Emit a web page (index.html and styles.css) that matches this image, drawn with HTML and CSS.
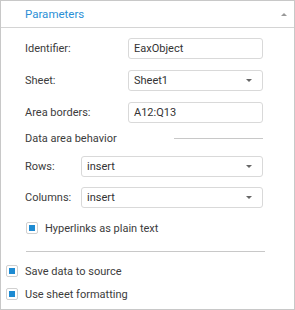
FILE: index.html
```html
<!DOCTYPE html>
<html lang="en">
<head>
    <meta charset="UTF-8">
    <meta name="viewport" content="width=device-width, initial-scale=1.0">
    <title>Parameters</title>
    <link rel="stylesheet" href="styles.css">
</head>
<body>
    <div class="panel">
        <div class="panel-header">
            <span class="panel-title">Parameters</span>
            <span class="collapse-arrow"></span>
        </div>
        <div class="panel-body">
            <div class="group">
                <div class="field-row">
                    <span class="field-label">Identifier:</span>
                    <div class="control wide">EaxObject</div>
                </div>
                <div class="field-row">
                    <span class="field-label">Sheet:</span>
                    <div class="control wide select">Sheet1<span class="drop-arrow"></span></div>
                </div>
                <div class="field-row">
                    <span class="field-label">Area borders:</span>
                    <div class="control wide">A12:Q13</div>
                </div>
                <div class="section-title">
                    <span>Data area behavior</span>
                    <span class="section-line"></span>
                </div>
                <div class="field-row short">
                    <span class="field-label">Rows:</span>
                    <div class="control select">insert<span class="drop-arrow"></span></div>
                </div>
                <div class="field-row short">
                    <span class="field-label">Columns:</span>
                    <div class="control select">insert<span class="drop-arrow"></span></div>
                </div>
                <label class="check-row">
                    <span class="checkbox checked"></span>
                    <span>Hyperlinks as plain text</span>
                </label>
            </div>
            <div class="separator"></div>
            <label class="check-row outer">
                <span class="checkbox checked"></span>
                <span>Save data to source</span>
            </label>
            <label class="check-row outer">
                <span class="checkbox checked"></span>
                <span>Use sheet formatting</span>
            </label>
        </div>
    </div>
</body>
</html>
```

FILE: styles.css
```css
* {
    margin: 0;
    padding: 0;
    box-sizing: border-box;
    font-family: Roboto, "Liberation Sans", Arial, sans-serif;
}
body {
    background: #fff;
}
.panel {
    width: 295px;
    height: 310px;
    border: 1px solid #c8c8c8;
    font-size: 11px;
    color: #3c3c3c;
}
.panel-header {
    height: 27px;
    border-bottom: 1px solid #d4d4d4;
    display: flex;
    align-items: center;
    padding-left: 24px;
    padding-right: 7px;
}
.panel-title {
    color: #2b8fd6;
    font-size: 11.5px;
    flex: 1;
}
.collapse-arrow {
    width: 0;
    height: 0;
    border-left: 3px solid transparent;
    border-right: 3px solid transparent;
    border-bottom: 3px solid #999;
}
.panel-body {
    padding-top: 10px;
}
.group {
    padding-left: 24px;
    padding-right: 31px;
}
.field-row {
    display: flex;
    align-items: center;
    margin-bottom: 11px;
}
.field-label {
    width: 103px;
}
.field-row.short .field-label {
    width: 56px;
}
.field-row.short {
    margin-bottom: 10px;
}
.control {
    flex: 1;
    height: 21px;
    border: 1px solid #d9d9d9;
    border-radius: 3px;
    display: flex;
    align-items: center;
    padding-left: 5px;
    padding-right: 10px;
    color: #333;
}
.select {
    justify-content: space-between;
}
.drop-arrow {
    width: 0;
    height: 0;
    border-left: 3px solid transparent;
    border-right: 3px solid transparent;
    border-top: 3px solid #666;
}
.section-title {
    display: flex;
    align-items: center;
    height: 16px;
    margin-top: -4px;
    margin-bottom: 10px;
}
.section-line {
    margin-left: auto;
    width: 89px;
    border-top: 1px solid #c8c8c8;
}
.check-row {
    display: flex;
    align-items: center;
    gap: 7px;
    height: 16px;
    margin-top: 12px;
    padding-left: 1px;
}
.checkbox {
    width: 12px;
    height: 12px;
    border: 1px solid #d0d0d0;
    border-radius: 2px;
    padding: 2px;
}
.checkbox.checked::after {
    content: "";
    display: block;
    width: 6px;
    height: 6px;
    background: #1e8bd2;
}
.separator {
    margin: 15px 29px 0 25px;
    border-top: 1px solid #c8c8c8;
}
.check-row.outer {
    padding-left: 5px;
    margin-top: 11px;
}
.check-row.outer + .check-row.outer {
    margin-top: 7px;
}
```
